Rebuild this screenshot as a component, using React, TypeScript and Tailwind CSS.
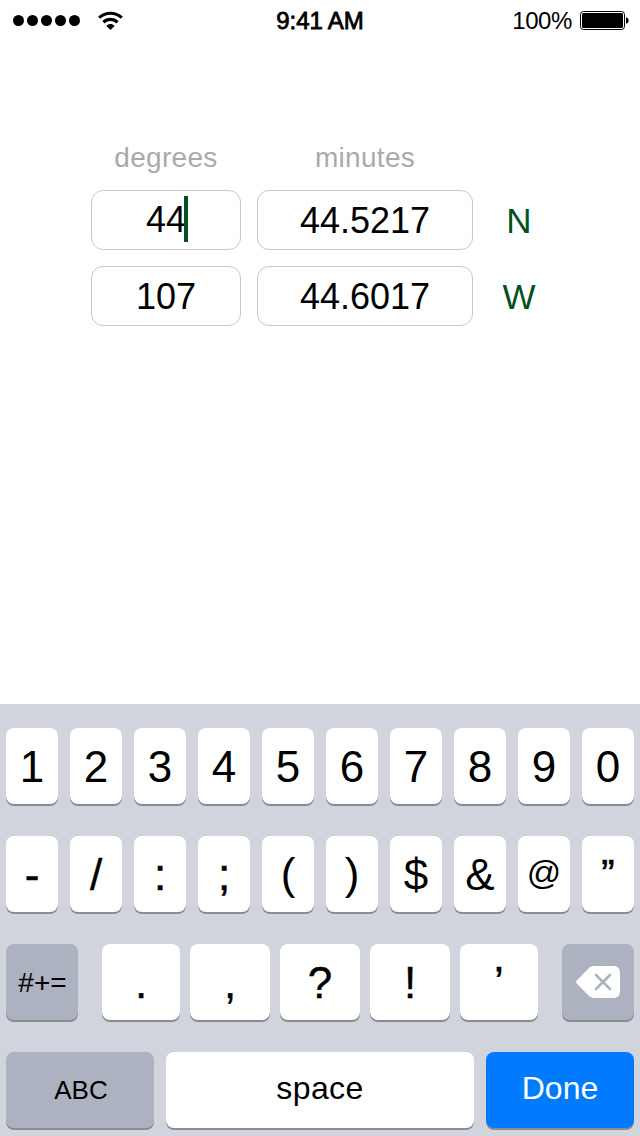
import React from 'react';
import clsx from 'clsx';

const digitKeys = ['1', '2', '3', '4', '5', '6', '7', '8', '9', '0'];

const symbolKeys = [
  { label: '-', text: 'pt-0.5 text-[44px] [-webkit-text-stroke:0.5px_black]' },
  { label: '/', text: 'pt-0.5 text-[44px] [-webkit-text-stroke:0.4px_black]' },
  { label: ':', text: 'pt-px text-[44px] [-webkit-text-stroke:0.6px_black]' },
  { label: ';', text: 'pt-px text-[44px] [-webkit-text-stroke:0.6px_black]' },
  { label: '(', text: 'text-[44px]' },
  { label: ')', text: 'text-[44px]' },
  { label: '$', text: 'pt-0.5 text-[44px]' },
  { label: '&', text: 'pt-0.5 text-[44px]' },
  { label: '@', text: 'pb-1 text-[34px]' },
  { label: '”', text: 'text-[40px] [-webkit-text-stroke:0.6px_black]' },
];

const punctuationKeys = [
  { label: '.', width: 'w-[78px]' },
  { label: ',', width: 'w-20' },
  { label: '?', width: 'w-20' },
  { label: '!', width: 'w-20' },
  { label: '’', width: 'w-[78px]' },
];

const coordinates = [
  { degrees: '44', minutes: '44.5217', direction: 'N', focused: true },
  { degrees: '107', minutes: '44.6017', direction: 'W', focused: false },
];

interface KeyProps {
  children: React.ReactNode;
  className?: string;
  tone?: 'light' | 'dark' | 'blue';
}

const Key: React.FC<KeyProps> = ({ children, className, tone = 'light' }) => (
  <button
    className={clsx(
      'flex h-[76px] shrink-0 items-center justify-center rounded-lg shadow-[0_2px_0_#888b8f]',
      tone === 'light' && 'bg-white text-black',
      tone === 'dark' && 'bg-[#acb2bf] text-black',
      tone === 'blue' && 'bg-[#007aff] text-white',
      className
    )}
  >
    {children}
  </button>
);

const WifiIcon = () => (
  <svg width="26" height="20" viewBox="0 0 26 20" fill="none" stroke="black" strokeWidth="3.2">
    <path d="M1.2 6.6C7.8 0.8 17.2 0.8 23.8 6.6" />
    <path d="M5.4 11.2C9.6 7.4 15.4 7.4 19.6 11.2" />
    <path d="M12.5 19L8.4 14.9C10.8 12.4 14.2 12.4 16.6 14.9Z" fill="black" stroke="none" />
  </svg>
);

const BatteryIcon = () => (
  <svg width="50" height="20" viewBox="0 0 50 20">
    <rect x="0.5" y="0.5" width="44" height="18" rx="3" fill="none" stroke="black" />
    <rect x="2" y="2" width="41" height="15" rx="1.5" fill="black" />
    <path d="M46 6.2C49.6 7 49.6 12 46 12.8Z" fill="black" />
  </svg>
);

const DeleteIcon = () => (
  <svg width="44" height="32" viewBox="0 0 44 32">
    <path
      d="M0.7 14.6L12.5 2.4C14.2 0.7 15.6 0 18 0H37C41.6 0 44 2.4 44 7V25C44 29.6 41.6 32 37 32H18C15.6 32 14.2 31.3 12.5 29.6L0.7 17.4C-0.2 16.5 -0.2 15.5 0.7 14.6Z"
      fill="white"
    />
    <path d="M20 9L34 23M34 9L20 23" stroke="#acb2bf" strokeWidth="2.6" strokeLinecap="round" />
  </svg>
);

const StatusBar = () => (
  <div className="grid h-10 grid-cols-3 items-center text-2xl leading-10 text-black">
    <div className="flex items-center pl-[13px]">
      <div className="flex gap-[3px]">
        {[0, 1, 2, 3, 4].map((dot) => (
          <span key={dot} className="size-[11px] rounded-full bg-black" />
        ))}
      </div>
      <div className="ml-[18px]">
        <WifiIcon />
      </div>
    </div>
    <div className="pt-px text-center tracking-[-0.1px] [-webkit-text-stroke:0.8px_black]">9:41 AM</div>
    <div className="flex items-center justify-end pr-2.5">
      <span className="pt-px tracking-[-0.4px]">100%</span>
      <div className="ml-2 h-5 w-[50px]">
        <BatteryIcon />
      </div>
    </div>
  </div>
);

const Field: React.FC<{ value: string; focused?: boolean }> = ({ value, focused }) => (
  <div
    className={clsx(
      'flex h-[60px] items-center justify-center rounded-xl border border-[#c8c8c8] text-4xl text-black',
      !focused && 'pt-0.5'
    )}
  >
    <span className="relative">
      {value}
      {focused && <span className="absolute -right-0.5 -top-1 h-[46px] w-1 bg-[#04501f]" />}
    </span>
  </div>
);

const CoordinateForm = () => (
  <div className="ml-[91px] mt-[98px] grid grid-cols-[150px_216px_60px] gap-4">
    <div className="h-9 text-center text-[28px] leading-10 tracking-[0.3px] text-[#aaaaaa]">degrees</div>
    <div className="h-9 text-center text-[28px] leading-10 tracking-[0.3px] text-[#aaaaaa]">minutes</div>
    <div />
    {coordinates.map((row) => (
      <React.Fragment key={row.direction}>
        <Field value={row.degrees} focused={row.focused} />
        <Field value={row.minutes} />
        <button className="h-[60px] text-center text-[35px] leading-[62px] text-[#04501f]">
          {row.direction}
        </button>
      </React.Fragment>
    ))}
  </div>
);

const Keyboard = () => (
  <div className="flex h-[432px] flex-col gap-8 bg-[#d1d4dc] px-1.5 pt-6">
    <div className="flex gap-3">
      {digitKeys.map((label) => (
        <Key key={label} className="w-[52px] pt-0.5 text-[44px]">{label}</Key>
      ))}
    </div>
    <div className="flex gap-3">
      {symbolKeys.map(({ label, text }) => (
        <Key key={label} className={clsx('w-[52px]', text)}>{label}</Key>
      ))}
    </div>
    <div className="flex justify-between">
      <Key tone="dark" className="w-[72px] pl-px pt-0.5 text-[28px]">#+=</Key>
      <div className="flex gap-2.5">
        {punctuationKeys.map(({ label, width }) => (
          <Key key={label} className={clsx('pt-px text-[44px] [-webkit-text-stroke:0.4px_black]', width)}>
            {label}
          </Key>
        ))}
      </div>
      <Key tone="dark" className="w-[72px]">
        <DeleteIcon />
      </Key>
    </div>
    <div className="flex gap-3">
      <Key tone="dark" className="w-[148px] pl-0.5 text-[26px]">ABC</Key>
      <Key className="w-[308px] pb-1 text-[32px] tracking-[0.4px]">space</Key>
      <Key tone="blue" className="w-[148px] pb-1 text-[32px]">Done</Key>
    </div>
  </div>
);

export default function App() {
  return (
    <div className="flex h-[1136px] w-[640px] flex-col justify-between overflow-hidden bg-white font-['Liberation_Sans',Arial,sans-serif]">
      <div>
        <StatusBar />
        <CoordinateForm />
      </div>
      <Keyboard />
    </div>
  );
}
